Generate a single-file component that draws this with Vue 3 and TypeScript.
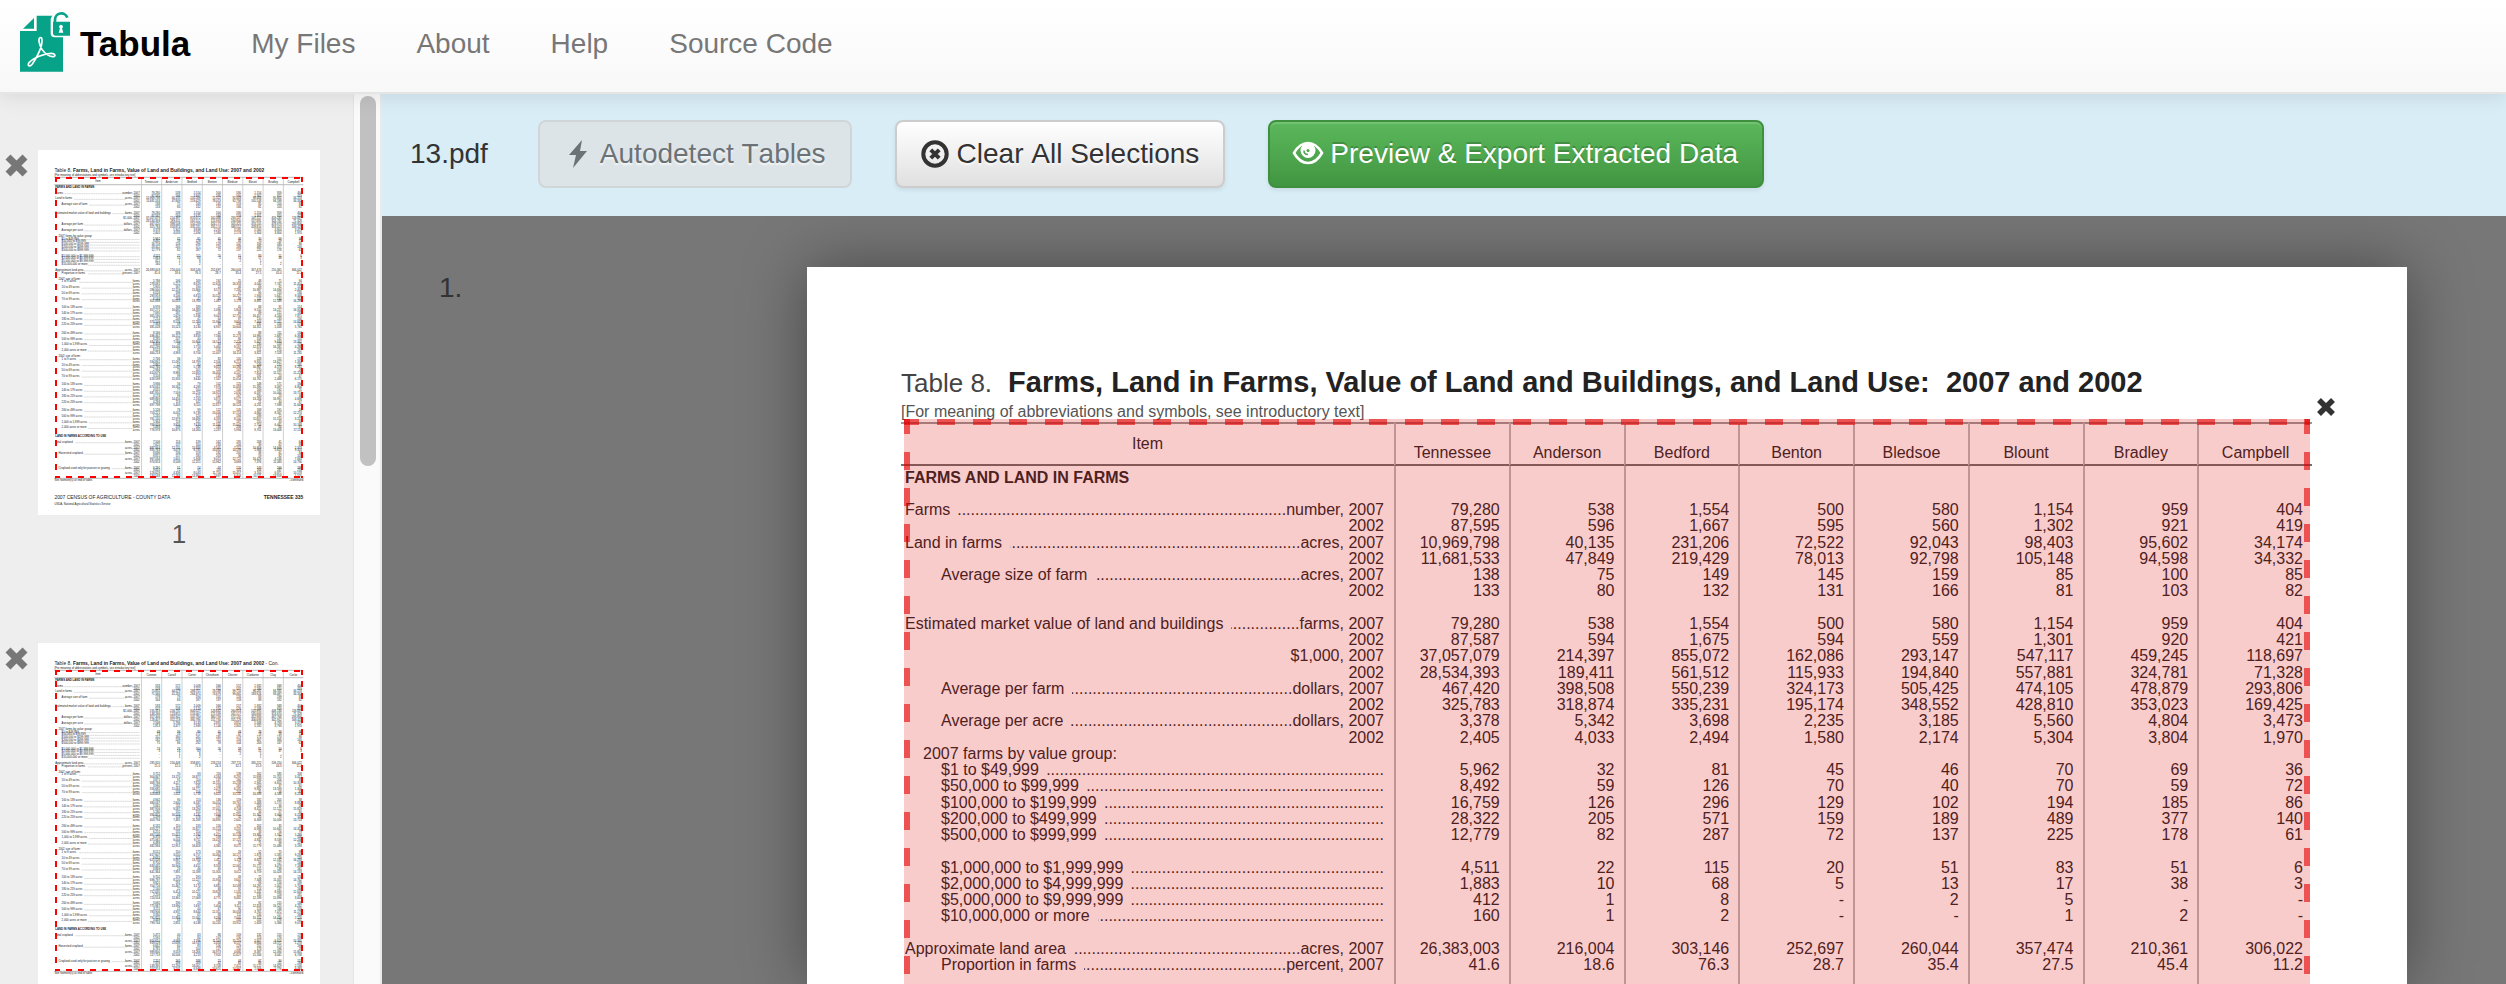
<script setup lang="ts">
interface Row {
  label?: string
  indent?: number
  unit?: string
  bold?: boolean
  leader?: boolean
  values?: string[]
}

interface Page {
  number: number
  suffix: string
  columns: string[]
  rows: Row[]
}

const navLinks = ['My Files', 'About', 'Help', 'Source Code']

const row = (label: string, indent: number, unit: string, values: string): Row => ({
  label,
  indent,
  unit,
  leader: label !== '',
  values: values ? values.split(' ') : [],
})
const blank: Row = {}
const heading = (label: string, indent: number): Row => ({ label, indent })

const leadRows: Row[] = [
  row('Farms', 0, 'number, 2007', '79,280 538 1,554 500 580 1,154 959 404'),
  row('', 0, '2002', '87,595 596 1,667 595 560 1,302 921 419'),
  row('Land in farms', 0, 'acres, 2007', '10,969,798 40,135 231,206 72,522 92,043 98,403 95,602 34,174'),
  row('', 0, '2002', '11,681,533 47,849 219,429 78,013 92,798 105,148 94,598 34,332'),
  row('Average size of farm', 2, 'acres, 2007', '138 75 149 145 159 85 100 85'),
  row('', 0, '2002', '133 80 132 131 166 81 103 82'),
  blank,
  row('Estimated market value of land and buildings', 0, 'farms, 2007', '79,280 538 1,554 500 580 1,154 959 404'),
  row('', 0, '2002', '87,587 594 1,675 594 559 1,301 920 421'),
  row('', 0, '$1,000, 2007', '37,057,079 214,397 855,072 162,086 293,147 547,117 459,245 118,697'),
  row('', 0, '2002', '28,534,393 189,411 561,512 115,933 194,840 557,881 324,781 71,328'),
  row('Average per farm', 2, 'dollars, 2007', '467,420 398,508 550,239 324,173 505,425 474,105 478,879 293,806'),
  row('', 0, '2002', '325,783 318,874 335,231 195,174 348,552 428,810 353,023 169,425'),
  row('Average per acre', 2, 'dollars, 2007', '3,378 5,342 3,698 2,235 3,185 5,560 4,804 3,473'),
  row('', 0, '2002', '2,405 4,033 2,494 1,580 2,174 5,304 3,804 1,970'),
  heading('2007 farms by value group:', 1),
  row('$1 to $49,999', 2, '', '5,962 32 81 45 46 70 69 36'),
  row('$50,000 to $99,999', 2, '', '8,492 59 126 70 40 70 59 72'),
  row('$100,000 to $199,999', 2, '', '16,759 126 296 129 102 194 185 86'),
  row('$200,000 to $499,999', 2, '', '28,322 205 571 159 189 489 377 140'),
  row('$500,000 to $999,999', 2, '', '12,779 82 287 72 137 225 178 61'),
  blank,
  row('$1,000,000 to $1,999,999', 2, '', '4,511 22 115 20 51 83 51 6'),
  row('$2,000,000 to $4,999,999', 2, '', '1,883 10 68 5 13 17 38 3'),
  row('$5,000,000 to $9,999,999', 2, '', '412 1 8 - 2 5 - -'),
  row('$10,000,000 or more', 2, '', '160 1 2 - - 1 2 -'),
  blank,
  row('Approximate land area', 0, 'acres, 2007', '26,383,003 216,004 303,146 252,697 260,044 357,474 210,361 306,022'),
  row('Proportion in farms', 2, 'percent, 2007', '41.6 18.6 76.3 28.7 35.4 27.5 45.4 11.2'),
]

const amount = (seed: number, low: number, span: number) =>
  (low + ((seed * 7919 + 104729) % span)).toLocaleString('en-US')

const counts = (seed: number) =>
  Array.from({ length: 8 }, (_, c) => (c === 0 ? amount(seed, 2100, 7800) : amount(seed * 9 + c * 37, 21, 190)))
const areas = (seed: number) =>
  Array.from({ length: 8 }, (_, c) => (c === 0 ? amount(seed, 110000, 880000) : amount(seed * 13 + c * 53, 1200, 16000)))

const sized = (label: string, seed: number): Row[] => [
  { label, indent: 2, unit: 'farms', leader: true, values: counts(seed) },
  { unit: 'acres', values: areas(seed + 5) },
]

const sizeGroup = (year: string, seed: number): Row[] => [
  heading(`${year} size of farm:`, 1),
  ...['1 to 9 acres', '10 to 49 acres', '50 to 69 acres', '70 to 99 acres'].flatMap((l, i) => sized(l, seed + i)),
  blank,
  ...['100 to 139 acres', '140 to 179 acres', '180 to 219 acres', '220 to 259 acres'].flatMap((l, i) => sized(l, seed + 10 + i)),
  blank,
  ...['260 to 499 acres', '500 to 999 acres', '1,000 to 1,999 acres', '2,000 acres or more'].flatMap((l, i) => sized(l, seed + 20 + i)),
]

const byYear = (label: string, indent: number, seed: number): Row[] => [
  { label, indent, unit: 'farms, 2007', leader: true, values: counts(seed) },
  { unit: '2002', values: counts(seed + 1) },
  { unit: 'acres, 2007', values: areas(seed + 2) },
  { unit: '2002', values: areas(seed + 3) },
]

const tailRows = (seed: number): Row[] => [
  blank,
  ...sizeGroup('2007', seed),
  ...sizeGroup('2002', seed + 40),
  blank,
  { label: 'LAND IN FARMS ACCORDING TO USE', indent: 0, bold: true },
  blank,
  ...byYear('Total cropland', 0, seed + 80),
  ...byYear('Harvested cropland', 1, seed + 90),
  blank,
  ...byYear('Cropland used only for pasture or grazing', 1, seed + 95),
]

const shift = (value: string, c: number) =>
  value === '-' ? value : value.replace(/\d/g, (d, at: number) => (at === 0 ? d : String((Number(d) + 3 + c) % 10)))

const pages: Page[] = [
  {
    number: 1,
    suffix: '',
    columns: ['Tennessee', 'Anderson', 'Bedford', 'Benton', 'Bledsoe', 'Blount', 'Bradley', 'Campbell'],
    rows: [...leadRows, ...tailRows(3)],
  },
  {
    number: 2,
    suffix: ' - Con.',
    columns: ['Cannon', 'Carroll', 'Carter', 'Cheatham', 'Chester', 'Claiborne', 'Clay', 'Cocke'],
    rows: [
      ...leadRows.map((r) => ({
        ...r,
        values: r.values && r.values.map((_, c) => shift(r.values![c === 0 ? 3 : c], c)),
      })),
      ...tailRows(117),
    ],
  },
]

const openPage = pages[0]
const visibleRows = openPage.rows.slice(0, leadRows.length)

const rowY = (i: number) => 248 + i * 16 + Math.floor(i / 4)
const columnX = (c: number) => 587 + c * 115
const labelX = (r: Row) => 98 + (r.indent ?? 0) * 18
const leaderStart = (r: Row) => labelX(r) + (r.label ?? '').length * 7 + 16
const leaderEnd = (r: Row) => 577 - (r.unit ?? '').length * 7
</script>

<template>
  <div class="app">
    <header class="navbar">
      <a class="brand" href="#">
        <svg class="logo" viewBox="0 0 150 180" aria-hidden="true">
          <path d="M0 57H50V11H129V179H0Z" fill="#06a388" />
          <path d="M9 50 42 18V50Z" fill="#06a388" />
          <path d="M92 21A31 31 0 0 1 152 21V76H104Q92 76 92 64Z" fill="#fdfdfd" />
          <path d="M105 30V23A19 19 0 0 1 142 17" fill="none" stroke="#06a388" stroke-width="8" />
          <path d="M99 29H150V71H106Q99 71 99 64Z" fill="#06a388" />
          <path d="M123 38A6 6 0 0 1 126 49L130 62H116L120 49A6 6 0 0 1 123 38Z" fill="#fff" />
          <path
            d="M60 77C54 80 57 97 66 112C75 126 90 135 100 134C108 133 106 124 94 124C72 124 40 138 28 151C20 161 29 166 37 156C48 140 67 106 66 86C66 79 64 75 60 77Z"
            fill="none" stroke="#fff" stroke-width="5" />
        </svg>
        Tabula
      </a>
      <nav class="nav">
        <a v-for="link in navLinks" :key="link" href="#">{{ link }}</a>
      </nav>
    </header>

    <div class="body">
      <aside class="sidebar">
        <div class="thumbs">
          <div v-for="page in pages" :key="page.number" class="thumb">
            <button class="delete" type="button" :aria-label="`Delete page ${page.number}`">
              <svg viewBox="0 0 23 23"><path d="M3 3 20 20M20 3 3 20" stroke="#777" stroke-width="7" /></svg>
            </button>
            <a class="preview" href="#">
              <svg class="mini" viewBox="0 0 1600 2071">
                <text class="mini-title" x="93" y="124"><tspan>Table 8.  </tspan><tspan class="strong">Farms, Land in Farms, Value of Land and Buildings, and Land Use:  2007 and 2002</tspan><tspan>{{ page.suffix }}</tspan></text>
                <text x="93" y="150">[For meaning of abbreviations and symbols, see introductory text]</text>
                <path d="M93 155H1505M93 197H1505M93 1863H1505" stroke="#777" stroke-width="3" />
                <text x="340" y="182" text-anchor="middle">Item</text>
                <g v-for="(name, c) in page.columns" :key="name">
                  <path :d="`M${columnX(c)} 155V1863`" stroke="#bbb" stroke-width="4" />
                  <text :x="columnX(c) + 57" :y="190" text-anchor="middle">{{ name }}</text>
                </g>
                <text class="strong" x="98" y="216">FARMS AND LAND IN FARMS</text>
                <g v-for="(r, i) in page.rows" :key="i">
                  <text v-if="r.label" :class="{ strong: r.bold }" :x="labelX(r)" :y="rowY(i)">{{ r.label }}</text>
                  <path v-if="r.leader" :d="`M${leaderStart(r)} ${rowY(i)}H${leaderEnd(r)}`" stroke="#555" stroke-width="2" stroke-dasharray="2 2" />
                  <text v-if="r.unit" x="577" :y="rowY(i)" text-anchor="end">{{ r.unit }}</text>
                  <text v-for="(v, c) in r.values" :key="c" :x="columnX(c) + 105" :y="rowY(i)" text-anchor="end">{{ v }}</text>
                </g>
                <text x="93" y="1880">See footnote(s) at end of table.</text>
                <text x="1505" y="1880" text-anchor="end">--continued</text>
                <text class="mini-foot" x="93" y="1980">2007 CENSUS OF AGRICULTURE - COUNTY DATA</text>
                <text class="mini-foot strong" x="1505" y="1980" text-anchor="end">TENNESSEE  335</text>
                <text x="93" y="2015">USDA, National Agricultural Statistics Service</text>
              </svg>
              <span class="selection small"></span>
            </a>
            <span class="page-number">{{ page.number }}</span>
          </div>
        </div>
        <div class="track"><div class="handle"></div></div>
      </aside>

      <main class="main">
        <div class="toolbar">
          <span class="filename">13.pdf</span>
          <button class="btn" type="button" disabled>
            <svg class="icon" viewBox="0 0 28 28"><path d="M18 0 5 15H12L9 28 23 11H16Z" /></svg>
            Autodetect Tables
          </button>
          <button class="btn" type="button">
            <svg class="icon" viewBox="0 0 28 28">
              <circle cx="14" cy="14" r="11.7" fill="none" stroke="currentColor" stroke-width="4" />
              <path d="M9.8 9.8 18.2 18.2M18.2 9.8 9.8 18.2" stroke="currentColor" stroke-width="4" />
            </svg>
            Clear All Selections
          </button>
          <button class="btn success" type="button">
            <svg class="icon" viewBox="0 0 28 28">
              <path d="M0 13C4 6 9 3 14 3S24 6 28 13C24 20 19 23 14 23S4 20 0 13Z" fill="none" stroke="currentColor" stroke-width="2.6" />
              <circle cx="14" cy="10.5" r="7.5" />
              <path d="M10 10.500Q10 14.500 14 14.500" fill="none" stroke="#4da64d" stroke-width="1.600" />
              <circle cx="14" cy="10.500" r="1.500" fill="#4da64d" />
            </svg>
            Preview &amp; Export Extracted Data
          </button>
        </div>

        <div class="canvas">
          <div class="ordinal">1.</div>
          <article class="sheet">
            <h1 class="title"><span class="table-no">Table 8.</span>Farms, Land in Farms, Value of Land and Buildings, and Land Use:&nbsp; 2007 and 2002</h1>
            <p class="note">[For meaning of abbreviations and symbols, see introductory text]</p>
            <table class="data">
              <thead>
                <tr>
                  <th class="item-head" scope="col">Item</th>
                  <th v-for="name in openPage.columns" :key="name" scope="col">{{ name }}</th>
                </tr>
              </thead>
              <tbody>
                <tr class="section">
                  <th scope="row">FARMS AND LAND IN FARMS</th>
                  <td v-for="name in openPage.columns" :key="name"></td>
                </tr>
                <tr v-for="(r, i) in visibleRows" :key="i">
                  <th scope="row">
                    <span class="item" :class="`indent-${r.indent ?? 0}`">
                      <span v-if="r.label">{{ r.label }}</span>
                      <span class="leader" :class="{ dots: r.leader }"></span>
                      <span v-if="r.unit">{{ r.unit }}</span>
                    </span>
                  </th>
                  <td v-for="(name, c) in openPage.columns" :key="name">{{ r.values?.[c] }}</td>
                </tr>
              </tbody>
              <tfoot>
                <tr>
                  <td class="gap"></td>
                  <td v-for="name in openPage.columns" :key="name"></td>
                </tr>
              </tfoot>
            </table>
            <div class="selection large">
              <button class="clear" type="button" aria-label="Remove selection">
                <svg viewBox="0 0 20 20"><path d="M3 3 17 17M17 3 3 17" stroke="#333" stroke-width="5.500" /></svg>
              </button>
            </div>
          </article>
        </div>
      </main>
    </div>
  </div>
</template>

<style>
body {
  margin: 0;
}
</style>

<style scoped>
.app {
  display: flex;
  flex-direction: column;
  height: 100vh;
  overflow: hidden;
  font-family: "Liberation Sans", Arial, sans-serif;
  font-size: 28px;
  color: #333;
  background: #777;
}

.app *,
.app *::before {
  box-sizing: border-box;
}

button {
  font: inherit;
  cursor: pointer;
}

.navbar {
  position: relative;
  z-index: 2;
  flex: none;
  display: flex;
  align-items: center;
  height: 94px;
  padding: 0 20px 4px;
  background: linear-gradient(#fff, #f8f8f8);
  border-bottom: 2px solid #e5e5e5;
  box-shadow: 0 2px 20px rgba(0, 0, 0, 0.1);
}

.brand {
  display: flex;
  align-items: center;
  gap: 10px;
  font-size: 35px;
  font-weight: bold;
  color: #000;
  text-decoration: none;
}

.logo {
  width: 50px;
  height: 60px;
  margin-bottom: 4px;
}

.nav {
  display: flex;
  gap: 61px;
  margin-left: 61px;
}

.nav a {
  color: #777;
  text-decoration: none;
}

.body {
  flex: 1;
  display: flex;
  min-height: 0;
}

.sidebar {
  flex: none;
  display: flex;
  width: 382px;
  overflow: hidden;
  background: #eee;
  border-right: 2px solid #eaeaea;
}

.thumbs {
  flex: 1;
  padding: 56px 0 0 5px;
}

.thumb {
  display: grid;
  grid-template-columns: 23px 282px;
  column-gap: 10px;
  margin-bottom: 90px;
}

.delete {
  align-self: start;
  margin-top: 4px;
  padding: 0;
  border: 0;
  background: none;
}

.delete svg,
.clear svg {
  display: block;
  width: 100%;
}

.preview {
  position: relative;
  display: block;
  background: #fff;
}

.mini {
  display: block;
  width: 100%;
  font-size: 16px;
  fill: #222;
  white-space: pre;
}

.mini-title {
  font-size: 28px;
}

.mini-foot {
  font-size: 28px;
}

.strong {
  font-weight: bold;
}

.page-number {
  grid-column: 2;
  font-size: 26px;
  line-height: 38px;
  text-align: center;
  color: #555;
}

.track {
  width: 27px;
  padding: 2px 4px 0 6px;
  background: #fafafa;
  border-left: 1px solid #e4e4e4;
}

.handle {
  width: 16px;
  height: 370px;
  border-radius: 8px;
  background: #c1c1c1;
}

.main {
  flex: 1;
  display: flex;
  flex-direction: column;
  min-width: 0;
}

.toolbar {
  position: relative;
  z-index: 1;
  display: flex;
  align-items: center;
  gap: 43px;
  padding: 26px 28px 28px;
  font-kerning: none;
  background: #d9edf7;
}

.filename {
  margin-right: 7px;
}

.btn {
  display: flex;
  align-items: center;
  gap: 8px;
  height: 68px;
  padding: 0 24px;
  color: #333;
  text-shadow: 0 2px 2px rgba(255, 255, 255, 0.75);
  white-space: nowrap;
  background: linear-gradient(#fff, #e0e0e0);
  border: 2px solid #ccc;
  border-radius: 8px;
  box-shadow: 0 2px 4px rgba(0, 0, 0, 0.08);
}

.btn:disabled {
  color: #6b7377;
  background: #dde4e7;
  border-color: #d0d5d8;
  box-shadow: none;
}

.btn.success {
  color: #fff;
  text-shadow: 0 -2px 0 rgba(0, 0, 0, 0.2);
  background: linear-gradient(#5cb85c, #419641);
  border-color: #3e8f3e;
  box-shadow: inset 0 2px 0 rgba(255, 255, 255, 0.15), 0 2px 4px rgba(0, 0, 0, 0.08);
}

.icon {
  width: 28px;
  height: 28px;
  overflow: visible;
  fill: currentColor;
}

.canvas {
  flex: 1;
  display: flex;
  min-height: 0;
  padding: 51px 99px 0 57px;
  background: #777;
}

.ordinal {
  width: 368px;
  padding-top: 5px;
  line-height: 32px;
}

.sheet {
  position: relative;
  flex: 1;
  min-width: 0;
  padding: 100px 95px 0 94px;
  background: #fff;
  box-shadow: 0 0 60px rgba(0, 0, 0, 0.4);
}

.title {
  margin: 0 0 4px;
  font-size: 29px;
  line-height: 30px;
  color: #222;
  white-space: nowrap;
}

.table-no {
  margin-right: 16px;
  font-size: 26px;
  font-weight: normal;
  color: #444;
}

.note {
  margin: 0;
  font-size: 16px;
  line-height: 20px;
  color: #555;
}

.data {
  width: 100%;
  table-layout: fixed;
  border-spacing: 0;
  font-size: 16px;
  line-height: 16px;
  color: #2a2a2a;
}

.data th,
.data td {
  padding: 0;
  font-weight: normal;
}

.data thead th {
  height: 44px;
  padding-bottom: 3px;
  vertical-align: bottom;
  border-top: 2px solid #999;
  border-bottom: 2px solid #707070;
}

.data thead .item-head {
  width: 493px;
  padding-bottom: 0;
  vertical-align: middle;
}

.data th + th,
.data td {
  border-left: 2px solid #bbb;
}

.data td {
  padding-right: 9px;
  text-align: right;
}

.data .gap {
  height: 40px;
  border-left: 0;
}

.data tbody tr {
  height: 16px;
}

.data tbody tr:nth-child(4n) {
  height: 17px;
}

.data tbody tr.section {
  height: 36px;
}

.data .section th {
  padding: 4px 0 0 4px;
  font-weight: bold;
  text-align: left;
  vertical-align: top;
}

.item {
  display: flex;
  height: 16px;
  padding: 0 10px 0 4px;
  white-space: nowrap;
}

.indent-1 {
  padding-left: 22px;
}

.indent-2 {
  padding-left: 40px;
}

.leader {
  flex: 1;
  width: 0;
  overflow: hidden;
}

.leader.dots {
  margin-left: 8px;
  direction: rtl;
}

.leader.dots::before {
  content: "........................................................................................................";
}

/* Dashes are drawn along each edge so their rhythm stays even at the corners. */
.selection {
  --dash: linear-gradient(90deg, var(--ink) 50%, transparent 50%);
  --dash-v: linear-gradient(var(--ink) 50%, transparent 50%);
  position: absolute;
  background-image: var(--dash), var(--dash), var(--dash-v), var(--dash-v);
  background-repeat: repeat-x, repeat-x, repeat-y, repeat-y;
}

.selection.small {
  --ink: #f00;
  inset: 27px 17px 37px;
  background-size: 12px 2px, 12px 2px, 2px 12px, 2px 12px;
  background-position: -1px 0, -1px 100%, 0 -1px, 100% -1px;
}

.selection.large {
  --ink: rgba(227, 0, 0, 0.6);
  inset: 152px 97px 0;
  background-color: rgba(225, 0, 0, 0.2);
  background-size: 36px 6px, 0 0, 6px 36px, 6px 36px;
  background-position: -3px 0, 0 0, 0 -3px, 100% -3px;
}

.clear {
  position: absolute;
  top: -22px;
  left: 100%;
  width: 32px;
  padding: 0 6px;
  border: 0;
  background: none;
}
</style>
